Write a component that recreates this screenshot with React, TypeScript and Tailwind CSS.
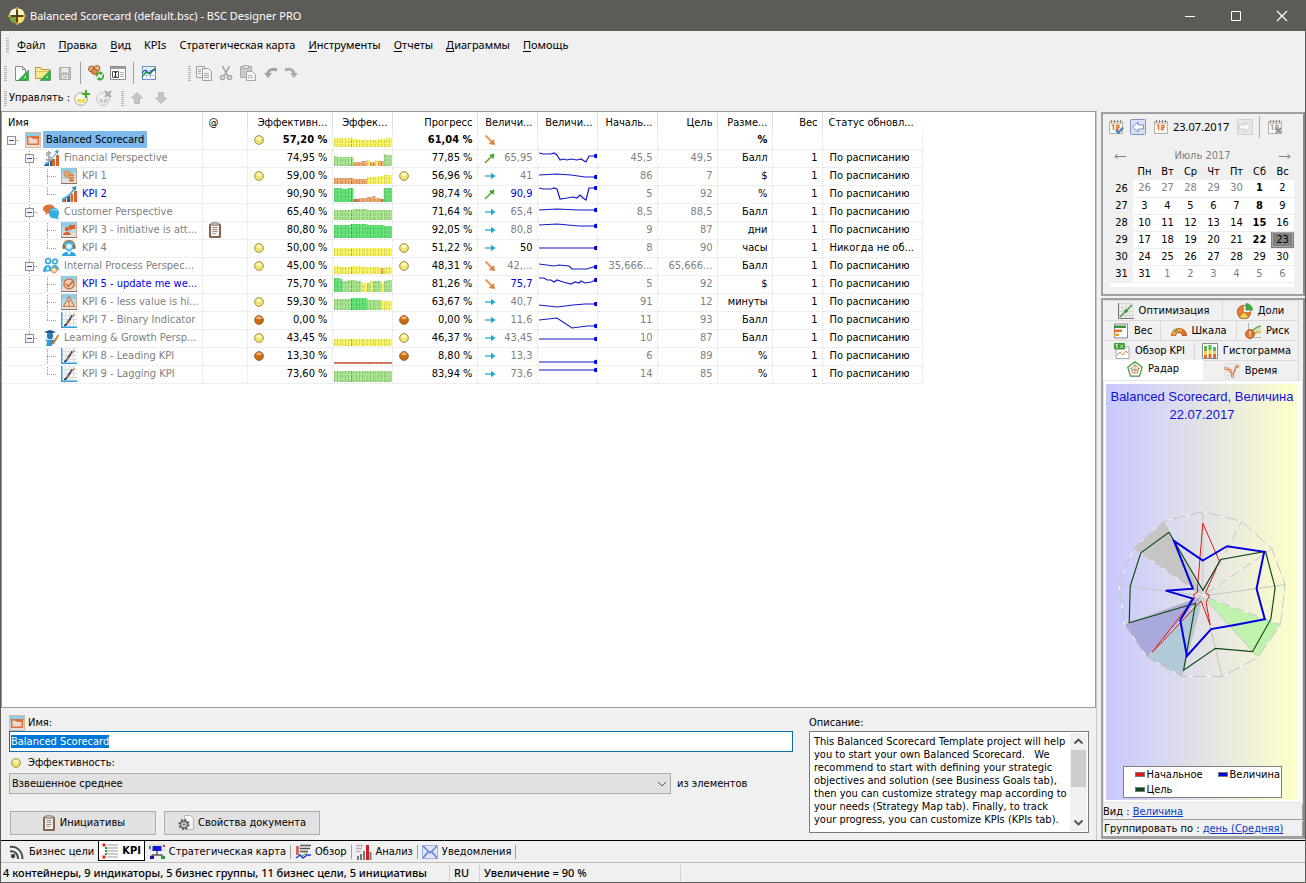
import { useEffect, useRef } from "react";
import type { ReactNode } from "react";

type Seg = [count: number, height: number, color: string];

type Row = {
    name: string;
    level: number;
    icon: string;
    last?: boolean;
    blue?: boolean;
    attach?: boolean;
    ball1?: string;
    ball2?: string;
    perf: string;
    progress: string;
    bars: Seg[];
    trend: string;
    value: string;
    valueColor?: string;
    line?: string;
    start: string;
    target: string;
    unit: string;
    weight: string;
    status: string;
};

const Y = "#f7f45f";
const G = "#a5e48b";
const D = "#5ee272";
const O = "#eda86c";
const R = "#cf745a";

const rows: Row[] = [
    { name: "Balanced Scorecard", level: 0, icon: "folder", ball1: "y", perf: "57,20 %", progress: "61,04 %", bars: [[7, 9, Y], [2, 8, Y], [7, 7, Y], [3, 8, Y], [2, 9, Y]], trend: "down", value: "", start: "", target: "", unit: "%", weight: "", status: "" },
    { name: "Financial Perspective", level: 1, icon: "finance", perf: "74,95 %", progress: "77,85 %", bars: [[1, 10, G], [6, 9, G], [3, 4, O], [2, 5, O], [1, 6, Y], [2, 4, O], [1, 6, Y], [2, 5, O], [1, 12, G], [2, 11, G]], trend: "up", value: "65,95", line: "0,4 4,5 12,5 15,4 18,6 21,11 24,10 28,11 32,10 38,11 42,10 47,13 50,7 57,7", start: "45,5", target: "49,5", unit: "Балл", weight: "1", status: "По расписанию" },
    { name: "KPI 1", level: 2, icon: "coins", ball1: "y", ball2: "y", perf: "59,00 %", progress: "56,96 %", bars: [[7, 6, O], [5, 5, O], [2, 7, Y], [2, 7, Y], [2, 8, Y], [3, 9, Y]], trend: "flat", value: "41", line: "0,8 18,7 32,8 46,10 57,10", start: "86", target: "7", unit: "$", weight: "1", status: "По расписанию" },
    { name: "KPI 2", level: 2, icon: "growth", last: true, blue: true, perf: "90,90 %", progress: "98,74 %", bars: [[3, 14, D], [2, 13, D], [2, 14, D], [2, 3, R], [3, 4, O], [2, 5, O], [1, 6, O], [2, 4, O], [1, 3, R], [3, 14, D]], trend: "up", value: "90,9", valueColor: "text-[#0000e0]", line: "0,3 4,4 12,4 15,3 18,4 21,14 28,13 34,12 38,13 41,10 44,13 47,15 50,3 57,3", start: "5", target: "92", unit: "%", weight: "1", status: "По расписанию" },
    { name: "Customer Perspective", level: 1, icon: "chat", perf: "65,40 %", progress: "71,64 %", bars: [[7, 10, G], [5, 11, G], [9, 10, G]], trend: "flat", value: "65,4", line: "0,7 18,6 40,7 57,7", start: "8,5", target: "88,5", unit: "Балл", weight: "1", status: "По расписанию" },
    { name: "KPI 3 - initiative is att...", level: 2, icon: "person", attach: true, perf: "80,80 %", progress: "92,05 %", bars: [[6, 13, D], [6, 14, D], [6, 13, D], [3, 12, D]], trend: "flat", value: "80,8", line: "0,4 18,3 40,5 57,5", start: "9", target: "87", unit: "дни", weight: "1", status: "По расписанию" },
    { name: "KPI 4", level: 2, icon: "support", last: true, ball1: "y", ball2: "y", perf: "50,00 %", progress: "51,22 %", bars: [[21, 8, Y]], trend: "flat", value: "50", valueColor: "text-black", line: "0,9 57,9", start: "8", target: "90", unit: "часы", weight: "1", status: "Никогда не об..." },
    { name: "Internal Process Perspec...", level: 1, icon: "process", ball1: "y", ball2: "y", perf: "45,00 %", progress: "48,31 %", bars: [[2, 8, Y], [4, 7, Y], [4, 8, Y], [7, 7, Y], [1, 6, O], [1, 6, Y], [2, 7, Y]], trend: "down", value: "42,...", line: "0,7 15,9 20,8 30,9 33,12 48,12 54,10 57,10", start: "35,666...", target: "65,666...", unit: "Балл", weight: "1", status: "По расписанию" },
    { name: "KPI 5 - update me we...", level: 2, icon: "check", blue: true, perf: "75,70 %", progress: "81,26 %", bars: [[2, 14, D], [1, 13, D], [2, 11, G], [3, 12, G], [2, 11, G], [2, 9, Y], [1, 9, G], [1, 11, Y], [3, 11, G], [1, 9, Y], [1, 11, G], [2, 12, G]], trend: "down", value: "75,7", valueColor: "text-[#0000e0]", line: "0,3 5,3 8,5 12,5 15,7 18,5 24,7 32,9 36,7 40,8 42,6 46,8 52,7 57,5", start: "5", target: "92", unit: "$", weight: "1", status: "По расписанию" },
    { name: "KPI 6 - less value is hi...", level: 2, icon: "warn", ball1: "y", perf: "59,30 %", progress: "63,67 %", bars: [[6, 11, G], [6, 12, D], [5, 10, G], [4, 9, Y]], trend: "flat", value: "40,7", line: "0,12 18,14 34,12 46,11 57,11", start: "91", target: "12", unit: "минуты", weight: "1", status: "По расписанию" },
    { name: "KPI 7 - Binary Indicator", level: 2, icon: "chart", last: true, ball1: "o", ball2: "o", perf: "0,00 %", progress: "0,00 %", bars: [], trend: "flat", value: "11,6", line: "0,9 18,7 33,17 48,15 57,15", start: "11", target: "93", unit: "Балл", weight: "1", status: "По расписанию" },
    { name: "Learning & Growth Persp...", level: 1, icon: "learn", last: true, ball1: "y", ball2: "y", perf: "43,45 %", progress: "46,37 %", bars: [[21, 7, Y]], trend: "flat", value: "43,45", line: "0,10 57,10", start: "10", target: "87", unit: "Балл", weight: "1", status: "По расписанию" },
    { name: "KPI 8 - Leading KPI", level: 2, icon: "chart", ball1: "o", ball2: "o", perf: "13,30 %", progress: "8,80 %", bars: [[21, 2, R]], trend: "flat", value: "13,3", line: "0,15 57,15", start: "6", target: "89", unit: "%", weight: "1", status: "По расписанию" },
    { name: "KPI 9 - Lagging KPI", level: 2, icon: "chart", last: true, perf: "73,60 %", progress: "83,94 %", bars: [[21, 11, G]], trend: "flat", value: "73,6", line: "0,5 57,5", start: "14", target: "85", unit: "%", weight: "1", status: "По расписанию" },
];

const columns = [
    { title: "Имя", width: "w-[200px]", align: "text-left" },
    { title: "@", width: "w-[45px]", align: "text-left" },
    { title: "Эффективн...", width: "w-[85px]", align: "text-right" },
    { title: "Эффек...", width: "w-[60px]", align: "text-right" },
    { title: "Прогресс", width: "w-[85px]", align: "text-right" },
    { title: "Величи...", width: "w-[60px]", align: "text-right" },
    { title: "Величи...", width: "w-[60px]", align: "text-right" },
    { title: "Началь...", width: "w-[60px]", align: "text-right" },
    { title: "Цель", width: "w-[60px]", align: "text-right" },
    { title: "Разме...", width: "w-[55px]", align: "text-right" },
    { title: "Вес", width: "w-[50px]", align: "text-right" },
    { title: "Статус обновл...", width: "w-[100px]", align: "text-left" },
];

const weeks = [
    { week: 26, days: [26, 27, 28, 29, 30, 1, 2] },
    { week: 27, days: [3, 4, 5, 6, 7, 8, 9] },
    { week: 28, days: [10, 11, 12, 13, 14, 15, 16] },
    { week: 29, days: [17, 18, 19, 20, 21, 22, 23] },
    { week: 30, days: [24, 25, 26, 27, 28, 29, 30] },
    { week: 31, days: [31, 1, 2, 3, 4, 5, 6] },
];

function Svg({ children, className = "" }: { children: ReactNode; className?: string }) {
    return (
        <svg viewBox="0 0 16 16" className={`h-4 w-4 shrink-0 ${className}`} fill="none" aria-hidden="true">
            {children}
        </svg>
    );
}

function Tile({ children }: { children: ReactNode }) {
    return (
        <Svg>
            <rect x="0" y="0" width="16" height="16" fill="#8fcdeb" />
            <rect x="0" y="5" width="16" height="6" fill="#b9dcea" />
            <rect x="0" y="11" width="16" height="5" fill="#e3e2de" />
            <path d="M.5 0v16M15.500 0v16" stroke="#c9a98e" />
            <path d="M0 15.500h16" stroke="#8a7364" />
            {children}
        </Svg>
    );
}

function TreeIcon({ name }: { name: string }) {
    switch (name) {
        case "folder":
            return (
                <Svg>
                    <rect width="16" height="16" fill="#8ecbe8" />
                    <rect y="6" width="16" height="5" fill="#bfdae3" />
                    <rect y="11" width="16" height="5" fill="#e6dfd8" />
                    <path d="M.5.5h15v15H.5z" stroke="#d5b9a2" />
                    <path d="M2.700 4.700h10.600v7.600H2.700z" fill="#efd9c9" stroke="#e0703f" strokeWidth="1.500" />
                    <path d="M6 5h7v2H8L7 6H6z" fill="#e0703f" />
                </Svg>
            );
        case "finance":
            return (
                <Svg>
                    <path d="M3 12h3v4H1zM7 10h2v6H7z" fill="#2b5a9e" />
                    <path d="M9 9h3v7H9zM13 5h3v11h-3z" fill="#d9642b" />
                    <path d="M1 15l7-5 6-8" stroke="#7cc6e6" strokeWidth="1.400" />
                    <path d="M15.500 0l-4 1 3.500 3z" fill="#2a9bd0" />
                    <path d="M8 3.500C7 2 3.500 2 3.500 4.300c0 2.500 4.800 1.600 4.800 4C8.300 10.500 4.500 11 3 9M5.800 1v10.500" stroke="#a3a3a3" strokeWidth="1.500" />
                </Svg>
            );
        case "coins":
            return (
                <Tile>
                    <path d="M3 4l4-2 3 3-1 4-3 1-3-2z" fill="#d9a376" stroke="#b98861" strokeWidth=".6" />
                    <path d="M8 7l5-1v7l-2 1-3-1z" fill="#e8742f" />
                    <path d="M8 8.500h5M8 11h5" stroke="#f6b383" />
                </Tile>
            );
        case "growth":
            return (
                <Svg>
                    <path d="M2 12h3v4H1zM6 10h3v6H6z" fill="#2b5a9e" />
                    <path d="M2 13h2v3H2zM9.500 8H12v8H9.500zM13 5h3v11h-3z" fill="#d9642b" />
                    <path d="M1 13c5-1 9-5 12-10" stroke="#3fa9dc" strokeWidth="1.500" />
                    <path d="M15.500 0l-5 1.500 4 3.500z" fill="#2f86bd" />
                </Svg>
            );
        case "chat":
            return (
                <Svg>
                    <ellipse cx="6" cy="4.800" rx="6" ry="4.300" fill="#df7038" />
                    <path d="M3 8l-1 3 4-2z" fill="#df7038" />
                    <path d="M11 4c3 0 5 2 5 5 0 2-1 3-1 4l.5 2.500-3-1C9 15 6 13 6 9.500 6 6 8 4 11 4z" fill="#37aee3" />
                    <path d="M8 7c1-1.500 4-2 6 0" stroke="#8fd3f1" strokeWidth="1.200" />
                </Svg>
            );
        case "person":
            return (
                <Tile>
                    <circle cx="6" cy="7" r="2.300" fill="#d9622c" />
                    <path d="M2 13c0-4 8-4 8 0zM8 3h6v4h-3l-2 2V7H8z" fill="#d9622c" />
                </Tile>
            );
        case "support":
            return (
                <Svg>
                    <circle cx="8" cy="6" r="5" fill="#45b5e6" />
                    <circle cx="8" cy="6.500" r="2.800" fill="#e3f4fb" />
                    <path d="M2.500 7C2 2 5 .8 8 .8S14 2 13.500 7" stroke="#a8764d" strokeWidth="1.400" />
                    <rect x="1.500" y="5" width="2.500" height="4" rx="1" fill="#8f6849" />
                    <rect x="12" y="5" width="2.500" height="4" rx="1" fill="#8f6849" />
                    <path d="M1 16c0-6 14-6 14 0z" fill="#2da5de" />
                    <path d="M6 12l2 3 2-3z" fill="#fff" />
                </Svg>
            );
        case "process":
            return (
                <Svg>
                    <circle cx="5" cy="3" r="2.500" fill="#fff" stroke="#2ba3d8" strokeWidth="1.500" />
                    <circle cx="12" cy="3.500" r="2.300" fill="#fff" stroke="#2ba3d8" strokeWidth="1.500" />
                    <path d="M0 14C0 5 9 5 9 13zM9 8c3-2 7-1 7 4H9z" fill="#38b0e3" />
                    <path d="M3 12l2-4 1 4z" fill="#fff" />
                    <circle cx="11" cy="12" r="2.600" fill="#fde7cf" stroke="#e18b3b" strokeWidth="1.800" strokeDasharray="1.400 .8" />
                </Svg>
            );
        case "check":
            return (
                <Tile>
                    <circle cx="8" cy="8" r="5" stroke="#d9713f" strokeWidth="1.500" fill="#e8cfbf" />
                    <path d="M5 8l2.500 2.500L12 5" stroke="#c9622f" strokeWidth="1.500" />
                </Tile>
            );
        case "warn":
            return (
                <Tile>
                    <path d="M8 2.500l5.500 10h-11z" fill="#ecd6c4" stroke="#c97c4c" strokeWidth="1.200" />
                    <path d="M8 6v3.500M8 10.500v1.200" stroke="#b9622f" strokeWidth="1.300" />
                </Tile>
            );
        case "learn":
            return (
                <Svg>
                    <path d="M1 2l6-2 6 2-6 2z" fill="#1d4f8f" />
                    <path d="M4 3.500h6v3a3 3 0 01-6 0z" fill="#2b78b8" />
                    <path d="M2 9l3 1h5l-1 6H3l1-4z" fill="#2f9fdc" />
                    <path d="M9 10l5-1-3 5H8z" fill="#2875b5" />
                    <path d="M15.500 5l-6 9" stroke="#e0833a" strokeWidth="2" />
                </Svg>
            );
        default:
            return (
                <Svg>
                    <rect width="16" height="16" fill="#f6f8fa" />
                    <path d="M4.500 0v15M8.500 0v15M12.500 0v15M1 3.500h15M1 7.500h15M1 11.500h15" stroke="#d6dee6" />
                    <path d="M.7 0v15.300H16" stroke="#2f9fdc" strokeWidth="1.400" />
                    <path d="M3 13.500c3 0 3-2 4-4s1.500-2 3-3" stroke="#1c2a5c" strokeWidth="1.500" />
                    <path d="M6 12c2-1 2-3 3-5s3-2 4.500-5" stroke="#e07b3c" strokeWidth="1.300" />
                    <path d="M8 9l3-6" stroke="#2a3f7c" strokeWidth="1.200" />
                </Svg>
            );
    }
}

function Ball({ kind }: { kind: string }) {
    return kind === "y" ? (
        <svg viewBox="0 0 10 10" className="h-[10px] w-[10px] shrink-0" aria-hidden="true">
            <circle cx="5" cy="5" r="4.400" fill="#eee272" stroke="#a3954a" />
            <ellipse cx="5" cy="3.600" rx="2.600" ry="1.800" fill="#fbf7b8" />
        </svg>
    ) : (
        <svg viewBox="0 0 10 10" className="h-[10px] w-[10px] shrink-0" aria-hidden="true">
            <circle cx="5" cy="5" r="4.400" fill="#c96a12" stroke="#a8652c" />
            <ellipse cx="5" cy="2.900" rx="2.800" ry="1.300" fill="#f0b57c" />
        </svg>
    );
}

function Trend({ kind }: { kind: string }) {
    return (
        <svg viewBox="0 0 12 12" className="h-3 w-3 shrink-0" fill="none" aria-hidden="true">
            {kind === "down" && (
                <>
                    <path d="M1.500 1.500L8 8" stroke="#e89a5c" strokeWidth="2" />
                    <path d="M11 11l-1-6-5.500 5z" fill="#df8642" />
                </>
            )}
            {kind === "up" && (
                <>
                    <path d="M1 11L8 4" stroke="#4ea32a" strokeWidth="1.500" />
                    <path d="M10.500 1.500L5 3l4.500 4z" fill="#4ea32a" />
                </>
            )}
            {kind === "flat" && (
                <>
                    <path d="M1 6h9" stroke="#1fa9d6" strokeWidth="1.300" />
                    <path d="M7 2.800L11.500 6 7 9.200z" fill="#1fa9d6" />
                </>
            )}
        </svg>
    );
}

function Bars({ segs }: { segs: Seg[] }) {
    const bars = segs.flatMap(([count, height, color]) => Array.from({ length: count }, () => ({ height, color })));
    const step = 58 / 21;
    return (
        <svg viewBox="0 0 58 17" className="block h-[17px] w-[58px]" aria-hidden="true">
            {bars.map((bar, i) => (
                <g key={i}>
                    <rect x={i * step} y={16 - bar.height} width={step + 0.1} height={bar.height} fill={bar.color} />
                    {bar.height > 2 && (
                        <path d={`M${Math.round(i * step) + 0.5} 16V${16 - bar.height}`} stroke="#000" strokeOpacity={i === 6 ? 0.3 : 0.14} strokeDasharray="3 1" />
                    )}
                </g>
            ))}
        </svg>
    );
}

function Line({ points }: { points: string }) {
    const end = points.split(" ").pop()!.split(",").map(Number);
    return (
        <svg viewBox="0 1 60 17" className="block h-[17px] w-[60px]" fill="none" aria-hidden="true">
            <polyline points={points} stroke="#1717c4" strokeWidth="1.200" />
            <circle cx={end[0]} cy={end[1]} r="2.200" fill="#0000e6" />
        </svg>
    );
}

function Guide({ kind }: { kind: "line" | "tee" | "elbow" | "none" }) {
    return (
        <svg viewBox="0 0 18 18" className="h-[18px] w-[18px] shrink-0" fill="none" shapeRendering="crispEdges" aria-hidden="true">
            {(kind === "line" || kind === "tee") && <path d="M9.500 0v18" stroke="#9a9a9a" strokeDasharray="1 1" />}
            {kind === "elbow" && <path d="M9.500 0v9" stroke="#9a9a9a" strokeDasharray="1 1" />}
            {(kind === "tee" || kind === "elbow") && <path d="M9 9.500h9" stroke="#9a9a9a" strokeDasharray="1 1" />}
        </svg>
    );
}

function Expander({ top, bottom }: { top: boolean; bottom: boolean }) {
    return (
        <button type="button" aria-label="Свернуть" className="h-[18px] w-[18px] shrink-0">
            <svg viewBox="0 0 18 18" className="block h-[18px] w-[18px]" fill="none" shapeRendering="crispEdges">
                {top && <path d="M9.500 0v5" stroke="#9a9a9a" strokeDasharray="1 1" />}
                {bottom && <path d="M9.500 14v4" stroke="#9a9a9a" strokeDasharray="1 1" />}
                <path d="M14 9.500h4" stroke="#9a9a9a" strokeDasharray="1 1" />
                <rect x="5.500" y="5.500" width="8" height="8" fill="#f4f4f4" stroke="#919191" />
                <path d="M7 9.500h5" stroke="#3b50a8" />
            </svg>
        </button>
    );
}

function Clipboard() {
    return (
        <Svg>
            <rect x="2" y="1.500" width="12" height="14.500" rx="1.500" fill="#8a6250" />
            <rect x="4" y="3" width="8" height="11" fill="#f4f1ec" />
            <rect x="5" y="0" width="6" height="3.500" rx="1" fill="#b9b4b0" stroke="#77706c" strokeWidth=".6" />
            <path d="M5.500 5.500h5M5.500 7.500h5M5.500 9.500h5M5.500 11.500h3" stroke="#8f8b88" />
        </Svg>
    );
}

function KpiTable() {
    return (
        <table className="w-[920px] table-fixed border-collapse">
            <colgroup>
                {columns.map((c, i) => (
                    <col key={i} className={c.width} />
                ))}
            </colgroup>
            <thead>
                <tr className="h-[19px]">
                    {columns.map((c, i) => (
                        <th key={i} scope="col" className={`border-r border-[#e0e0e0] pt-[2px] pr-1 pb-0 pl-[6px] font-normal whitespace-nowrap last:border-r-0 ${c.align}`}>
                            {c.title}
                        </th>
                    ))}
                </tr>
            </thead>
            <tbody>
                {rows.map((r) => {
                    const cell = "border-r border-b border-dotted border-[#e2e2e2] p-0 overflow-hidden whitespace-nowrap";
                    const num = `${cell} pr-1 text-right`;
                    const bold = r.level === 0 ? "font-bold" : "";
                    return (
                        <tr key={r.name} className="h-[18px]">
                            <td className={cell}>
                                <div className="flex h-[17px] items-center">
                                    {r.level === 0 && <Expander top={false} bottom={false} />}
                                    {r.level === 1 && (
                                        <>
                                            <Guide kind="none" />
                                            <Expander top bottom={!r.last} />
                                        </>
                                    )}
                                    {r.level === 2 && (
                                        <>
                                            <Guide kind="none" />
                                            <Guide kind={r.name.startsWith("KPI 8") || r.name.startsWith("KPI 9") ? "none" : "line"} />
                                            <Guide kind={r.last ? "elbow" : "tee"} />
                                        </>
                                    )}
                                    <span className="ml-[5px] flex items-center gap-[2px]">
                                        <TreeIcon name={r.icon} />
                                        <span className={r.level === 0 ? "bg-[#7cb9ec] px-[3px] leading-[17px] text-black" : r.blue ? "pl-[3px] text-[#0000e0]" : "pl-[3px] text-[#808080]"}>
                                            {r.name}
                                        </span>
                                    </span>
                                </div>
                            </td>
                            <td className={cell}>{r.attach && <div className="pl-1"><Clipboard /></div>}</td>
                            <td className={num}>
                                <div className={`flex items-center justify-between pl-[6px] ${bold}`}>
                                    <span>{r.ball1 && <Ball kind={r.ball1} />}</span>
                                    {r.perf}
                                </div>
                            </td>
                            <td className={`${cell} pl-px`}><Bars segs={r.bars} /></td>
                            <td className={num}>
                                <div className={`flex items-center justify-between pl-[6px] ${bold}`}>
                                    <span>{r.ball2 && <Ball kind={r.ball2} />}</span>
                                    {r.progress}
                                </div>
                            </td>
                            <td className={num}>
                                <div className={`flex items-center justify-between pl-[6px] ${r.valueColor ?? "text-[#808080]"}`}>
                                    <Trend kind={r.trend} />
                                    {r.value}
                                </div>
                            </td>
                            <td className={`${cell} pl-px`}>{r.line && <Line points={r.line} />}</td>
                            <td className={`${num} text-[#808080]`}>{r.start}</td>
                            <td className={`${num} text-[#808080]`}>{r.target}</td>
                            <td className={`${num} ${bold}`}>{r.unit}</td>
                            <td className={num}>{r.weight}</td>
                            <td className={`${cell} pl-[7px]`}>{r.status}</td>
                        </tr>
                    );
                })}
            </tbody>
        </table>
    );
}

function Grip() {
    return <span className="h-4 w-[3px] shrink-0 bg-[repeating-linear-gradient(0deg,#b4b4b4_0_1px,transparent_1px_2px)]" />;
}

function Tool({ label, children }: { label: string; children: ReactNode }) {
    return (
        <button type="button" aria-label={label} className="flex h-[22px] w-[22px] items-center justify-center">
            {children}
        </button>
    );
}

function TitleBar() {
    return (
        <header className="flex h-[31px] items-center bg-[#5d5b58] pl-[7px] text-white">
            <svg viewBox="0 0 18 18" className="h-[18px] w-[18px]" fill="none" aria-hidden="true">
                <circle cx="9" cy="9" r="7.800" fill="#54401a" />
                <path d="M8 8H1.200A8 8 0 018 1.200z" fill="#fbf8dc" />
                <path d="M10 8V1.200A8 8 0 0116.800 8z" fill="#fdf3b4" />
                <path d="M8 10v6.800A8 8 0 011.200 10z" fill="#7fa545" />
                <path d="M10 10h6.800A8 8 0 0110 16.800z" fill="#f7de6d" />
                <path d="M9 0v3M9 15v3M0 9h3M15 9h3" stroke="#e8b93c" strokeWidth="1.400" />
            </svg>
            <h1 className="ml-1 flex-1 font-['Noto_Sans',sans-serif] text-[11px]">Balanced Scorecard (default.bsc) - BSC Designer PRO</h1>
            <div className="flex">
                <button type="button" aria-label="Свернуть" className="flex h-[30px] w-[46px] items-center justify-center">
                    <svg viewBox="0 0 12 12" className="h-3 w-3" fill="none"><path d="M1 6.500h10" stroke="#fff" /></svg>
                </button>
                <button type="button" aria-label="Развернуть" className="flex h-[30px] w-[46px] items-center justify-center">
                    <svg viewBox="0 0 12 12" className="h-3 w-3" fill="none"><path d="M1.500 1.500h9v9h-9z" stroke="#fff" /></svg>
                </button>
                <button type="button" aria-label="Закрыть" className="flex h-[30px] w-[46px] items-center justify-center">
                    <svg viewBox="0 0 12 12" className="h-3 w-3" fill="none"><path d="M1 1l10 10M11 1L1 11" stroke="#fff" strokeWidth="1.200" /></svg>
                </button>
            </div>
        </header>
    );
}

const menu = [
    ["Ф", "айл"],
    ["П", "равка"],
    ["В", "ид"],
    ["", "KPIs"],
    ["", "Стратегическая карта"],
    ["И", "нструменты"],
    ["О", "тчеты"],
    ["Д", "иаграммы"],
    ["П", "омощь"],
];

function Toolbars() {
    return (
        <div className="flex flex-col">
            <nav className="flex h-7 items-center pl-[5px] font-['Noto_Sans',sans-serif] text-[11px]">
                <Grip />
                <div className="ml-2 flex gap-[13px]">
                    {menu.map(([key, rest], i) => (
                        <button key={i} type="button">
                            <span className="underline underline-offset-2">{key}</span>
                            {rest}
                        </button>
                    ))}
                </div>
            </nav>
            <div className="flex h-[27px] items-center pl-[3px]">
                <Grip />
                <div className="ml-[3px] flex items-center">
                    <Tool label="Новый">
                        <Svg>
                            <path d="M2.500 1.500h7l3 3v11h-10z" fill="#fff" stroke="#8a8a8a" />
                            <path d="M9.500 1.500v3h3" stroke="#8a8a8a" />
                            <path d="M15.500 5v10.500H5z" fill="#35b04a" stroke="#2c8f3b" strokeWidth=".6" />
                            <path d="M13 10.500V13h-2.500z" fill="#c5efc4" />
                        </Svg>
                    </Tool>
                    <Tool label="Открыть">
                        <Svg>
                            <path d="M.5 2.500h5l1 2h8v9H.5z" fill="#f8ea8e" stroke="#b99a3c" />
                            <path d="M1 6.500h13" stroke="#dcc661" />
                            <path d="M15.500 5v10.500H5z" fill="#35b04a" stroke="#2c8f3b" strokeWidth=".6" />
                            <path d="M13 10.500V13h-2.500z" fill="#c5efc4" />
                        </Svg>
                    </Tool>
                    <Tool label="Сохранить">
                        <Svg>
                            <path d="M2.500 2.500h11v12h-11z" fill="#c6c6c6" stroke="#a8a8a8" />
                            <path d="M5 3h6v4H5z" fill="#ececec" />
                            <path d="M4.500 9.500h7v5h-7z" fill="#f3f3f3" stroke="#ababab" />
                            <path d="M6 11.500h4M6 13h4" stroke="#b5b5b5" />
                        </Svg>
                    </Tool>
                    <span className="mx-1 h-[22px] w-px bg-[#a0a0a0]" />
                    <Tool label="Обновить">
                        <Svg>
                            <circle cx="3.500" cy="4" r="2.900" fill="#e8b07a" stroke="#9f5520" />
                            <circle cx="9" cy="3.500" r="2.900" fill="#efc08c" stroke="#9f5520" />
                            <circle cx="6.500" cy="6.500" r="2.900" fill="#dc8d4a" stroke="#9f5520" />
                            <path d="M8.500 11.500a3.500 3.500 0 014-3.500M15 9.500a3.500 3.500 0 01-3.500 5" stroke="#3faa3a" strokeWidth="1.800" />
                            <path d="M12 6l3 2-3 2.500zM12 12v4l-3.500-2z" fill="#3faa3a" />
                        </Svg>
                    </Tool>
                    <Tool label="Свойства">
                        <Svg>
                            <path d="M.5 1.500h15v13H.5z" fill="#fafafa" stroke="#8c8c8c" />
                            <path d="M1 3h14" stroke="#9e9e9e" strokeWidth="2" />
                            <path d="M2.500 6.500h6v6h-6z" fill="#fff" stroke="#555" />
                            <path d="M4.500 7.500h2M5.500 7.500v4M4.500 11.500h2" stroke="#222" />
                            <path d="M10 7.500h4M10 9.500h4M10 11.500h4" stroke="#b5b5b5" />
                        </Svg>
                    </Tool>
                    <span className="mx-1 h-[22px] w-px bg-[#a0a0a0]" />
                    <Tool label="График">
                        <Svg>
                            <path d="M1.500 1.500h13v13h-13z" fill="#fff" stroke="#5f83c4" />
                            <path d="M5.500 1v14M9.500 1v14M1 5.500h14M1 10.500h14" stroke="#b6c8e6" />
                            <path d="M1 12l4-5 4 2 5-6" stroke="#2da13a" strokeWidth="1.500" />
                            <path d="M1 8l3-3 4 3 4-3h3" stroke="#2c5fc0" strokeWidth="1.300" />
                        </Svg>
                    </Tool>
                </div>
                <div className="ml-[28px] flex items-center">
                    <Grip />
                    <span className="w-[2px]" />
                    <Tool label="Копировать">
                        <Svg>
                            <path d="M.5 1.500h8v11h-8z" fill="#f2f2f2" stroke="#a0a0a0" />
                            <path d="M6.500 3.500h6l3 3v9h-9z" fill="#f2f2f2" stroke="#a0a0a0" />
                            <path d="M2 4.500h3M2 6.500h3M2 8.500h3M8 8.500h5M8 10.500h5M8 12.500h5" stroke="#a8a8a8" />
                        </Svg>
                    </Tool>
                    <Tool label="Вырезать">
                        <Svg>
                            <path d="M4.500 1l5 9.500M11.500 1l-5 9.500" stroke="#a3a3a3" strokeWidth="1.600" />
                            <circle cx="4.500" cy="12.500" r="2" stroke="#a3a3a3" strokeWidth="1.500" />
                            <circle cx="11.500" cy="12.500" r="2" stroke="#a3a3a3" strokeWidth="1.500" />
                        </Svg>
                    </Tool>
                    <Tool label="Вставить">
                        <Svg>
                            <path d="M.5 1.500h11v11H.5z" fill="#c9c9c9" stroke="#a9a9a9" />
                            <path d="M3.500.5h5v3h-5z" fill="#e3e3e3" stroke="#a9a9a9" />
                            <path d="M6.500 6.500h6l3 3v6h-9z" fill="#f4f4f4" stroke="#a5a5a5" />
                            <path d="M8 10.500h4M8 12.500h5" stroke="#b5b5b5" />
                        </Svg>
                    </Tool>
                    <Tool label="Отменить">
                        <Svg>
                            <path d="M2 8h8l-4 5z" fill="#a3a3a3" />
                            <path d="M6 9c0-4 4-6 9-4" stroke="#a3a3a3" strokeWidth="3" />
                        </Svg>
                    </Tool>
                    <Tool label="Вернуть">
                        <Svg>
                            <path d="M14 8H6l4 5z" fill="#adadad" />
                            <path d="M10 9c0-4-4-6-9-4" stroke="#adadad" strokeWidth="3" />
                        </Svg>
                    </Tool>
                </div>
            </div>
            <div className="flex h-6 items-center pl-[3px]">
                <Grip />
                <span className="ml-[2px]">Управлять :</span>
                <div className="ml-px flex items-center">
                    <Tool label="Добавить">
                        <Svg>
                            <circle cx="7" cy="9" r="6.300" fill="#f8f8f0" stroke="#a6a6a0" />
                            <path d="M3 9h4v4C4.500 13 3 11.500 3 9zM8 9h4c0 2.500-1.500 4-4 4z" fill="#f0d84a" />
                            <path d="M12 0v8M8 4h8" stroke="#46a82c" strokeWidth="2.200" />
                        </Svg>
                    </Tool>
                    <Tool label="Удалить">
                        <Svg>
                            <circle cx="7" cy="9" r="6.300" fill="#f0f0f0" stroke="#c4c4c4" />
                            <path d="M3 9h4v4C4.500 13 3 11.500 3 9zM8 9h4c0 2.500-1.500 4-4 4z" fill="#c9c9c9" />
                            <path d="M9 1l6 6M15 1L9 7" stroke="#a8a8a8" strokeWidth="2" />
                        </Svg>
                    </Tool>
                </div>
                <div className="ml-[6px] flex items-center gap-[2px]">
                    <Grip />
                    <Tool label="Вверх">
                        <Svg><path d="M8 2.500l5.500 5.500h-3v5.500h-5V8h-3z" fill="#c6c6c6" stroke="#b0b0b0" strokeWidth=".8" /></Svg>
                    </Tool>
                    <Tool label="Вниз">
                        <Svg><path d="M8 13.500L2.500 8h3V2.500h5V8h3z" fill="#c6c6c6" stroke="#b0b0b0" strokeWidth=".8" /></Svg>
                    </Tool>
                </div>
            </div>
        </div>
    );
}

const description =
    "This Balanced Scorecard Template project will help\nyou to start your own Balanced Scorecard.   We\nrecommend to start with defining your strategic\nobjectives and solution (see Business Goals tab),\nthen you can customize strategy map according to\nyour needs (Strategy Map tab). Finally, to track\nyour progress, you can customize KPIs (KPIs tab).";

function DetailsForm() {
    const nameRef = useRef<HTMLInputElement>(null);

    useEffect(() => {
        nameRef.current?.focus();
        nameRef.current?.select();
    }, []);

    return (
        <form className="flex h-[132px] shrink-0 pt-[6px] pr-[7px] pl-2">
            <div className="flex flex-1 flex-col">
                <label htmlFor="item-name" className="flex h-[17px] items-center gap-[3px]">
                    <TreeIcon name="folder" />
                    Имя:
                </label>
                <input
                    id="item-name"
                    ref={nameRef}
                    defaultValue="Balanced Scorecard"
                    className="h-[21px] border border-[#0f6fae] bg-white px-px outline-none selection:bg-[#0078d7] selection:text-white"
                />
                <label htmlFor="item-perf" className="flex h-[21px] items-center gap-[7px] pl-[2px]">
                    <Ball kind="y" />
                    Эффективность:
                </label>
                <div className="flex items-center gap-[6px]">
                    <div className="relative w-[662px]">
                        <select id="item-perf" className="h-[21px] w-full appearance-none border border-[#acacac] bg-[#e1e1e1] px-[2px]">
                            <option>Взвешенное среднее</option>
                        </select>
                        <svg viewBox="0 0 10 6" className="pointer-events-none absolute top-2 right-1 h-[6px] w-[10px]" fill="none">
                            <path d="M1 1l4 4 4-4" stroke="#555" />
                        </svg>
                    </div>
                    <span>из элементов</span>
                </div>
                <div className="mt-[17px] flex gap-2 pl-px">
                    <button type="button" className="flex h-6 w-[146px] items-center justify-center gap-[3px] border border-[#adadad] bg-[#e1e1e1]">
                        <Clipboard />
                        Инициативы
                    </button>
                    <button type="button" className="flex h-6 w-[156px] items-center justify-center gap-1 border border-[#adadad] bg-[#e1e1e1]">
                        <Svg>
                            <path d="M6.500.5h6l3 3v11h-9z" fill="#f5f5f5" stroke="#b5b5b5" />
                            <circle cx="6" cy="9.500" r="4.600" stroke="#5f5f5f" strokeWidth="2" strokeDasharray="2 1.600" />
                            <circle cx="6" cy="9.500" r="3.300" fill="#e8e8e8" stroke="#5f5f5f" strokeWidth="1.400" />
                            <circle cx="6" cy="9.500" r="1.200" fill="#5f5f5f" />
                        </Svg>
                        Свойства документа
                    </button>
                </div>
            </div>
            <div className="ml-4 flex w-[280px] flex-col">
                <label htmlFor="item-desc" className="h-[17px] leading-[17px]">Описание:</label>
                <div className="flex h-[102px] border border-[#7a7a7a] bg-white p-px">
                    <textarea id="item-desc" defaultValue={description} className="flex-1 resize-none overflow-hidden pt-[2px] pl-[3px] leading-[13px] whitespace-pre outline-none" />
                    <div className="flex w-[17px] flex-col items-center bg-[#f0f0f0]">
                        <svg viewBox="0 0 17 17" className="h-[17px] w-[17px]" fill="none"><path d="M4.500 10.500l4-4 4 4" stroke="#505050" strokeWidth="1.800" /></svg>
                        <div className="h-[37px] w-[15px] bg-[#cdcdcd]" />
                        <svg viewBox="0 0 17 17" className="mt-auto h-[17px] w-[17px]" fill="none"><path d="M4.500 6.500l4 4 4-4" stroke="#505050" strokeWidth="1.800" /></svg>
                    </div>
                </div>
            </div>
        </form>
    );
}

function CalIcon({ color, mark }: { color: string; mark?: ReactNode }) {
    return (
        <Svg>
            <path d="M1.500 2.500h13v12h-13z" fill="#fbf6f0" stroke="#b8b0aa" />
            <path d="M2 4.500h12" stroke="#cfc8c2" />
            <path d="M3.500 1v3M6.500 1v3M9.500 1v3M12.500 1v3" stroke="#8d8781" />
            <path d="M4 7l1.500-1v5M8 6.500h3v2H8.500v2H11" stroke={color} strokeWidth="1.300" />
            {mark}
        </Svg>
    );
}

function CalendarPanel() {
    return (
        <section className="h-[184px] shrink-0 border-2 border-[#a0a0a0] border-r-[#8a8a8a] pt-[2px] pr-2 pl-[5px]">
            <div className="flex h-[22px] items-center">
                <button type="button" aria-label="Сегодня">
                    <CalIcon color="#e0762f" mark={<path d="M8 11l2.500 3L15 8.500" stroke="#3f7fc4" strokeWidth="2" />} />
                </button>
                <button type="button" aria-label="Назад" className="ml-[6px]">
                    <Svg>
                        <rect x=".5" y=".5" width="15" height="15" rx="1" fill="#d7e0f4" stroke="#7d93c8" />
                        <path d="M2.500 8L8 3v3h5.500v4H8v3z" fill="#fff" stroke="#6d86c4" strokeWidth=".9" />
                    </Svg>
                </button>
                <button type="button" className="ml-[7px] flex items-center gap-1 font-['Noto_Sans',sans-serif] text-[11px]">
                    <CalIcon color="#e0762f" />
                    23.07.2017
                </button>
                <button type="button" aria-label="Вперёд" className="ml-2">
                    <Svg>
                        <rect x=".5" y=".5" width="15" height="15" rx="1" fill="#e6e6e6" stroke="#cfcfcf" />
                        <path d="M13.500 8L8 3v3H2.500v4H8v3z" fill="#fafafa" stroke="#c8c8c8" strokeWidth=".9" />
                    </Svg>
                </button>
                <span className="ml-[6px] h-[22px] w-px bg-[#b0b0b0]" />
                <button type="button" aria-label="Удалить дату" className="ml-[7px]">
                    <CalIcon color="#a8a8a8" mark={<path d="M9 9l5 5M14 9l-5 5" stroke="#8f8f8f" strokeWidth="2" />} />
                </button>
            </div>
            <div className="mt-[10px] flex items-center justify-between pr-1 pl-[6px] text-[#808080]">
                <button type="button" aria-label="Предыдущий месяц"><svg viewBox="0 0 12 7" className="h-[7px] w-3" fill="none"><path d="M12 3.500H1M3.500 1L1 3.500 3.500 6" stroke="#808080" /></svg></button>
                <span className="leading-4">Июль 2017</span>
                <button type="button" aria-label="Следующий месяц"><svg viewBox="0 0 12 7" className="h-[7px] w-3" fill="none"><path d="M0 3.500h11M8.500 1L11 3.500 8.500 6" stroke="#808080" /></svg></button>
            </div>
            <table className="ml-[2px] w-[184px] table-fixed border-collapse text-center">
                <thead>
                    <tr className="h-4">
                        <th className="w-[23px]" aria-label="Неделя" />
                        {["Пн", "Вт", "Ср", "Чт", "Пт", "Сб", "Вс"].map((d) => (
                            <th key={d} scope="col" className="p-0 font-normal">{d}</th>
                        ))}
                    </tr>
                </thead>
                <tbody>
                    {weeks.map(({ week, days }, w) => (
                        <tr key={week} className="h-[17px]">
                            <th scope="row" className="p-0 font-normal">{week}</th>
                            {days.map((d, i) => {
                                const outside = (w === 0 && d > 20) || (w === 5 && d < 10);
                                const today = w === 3 && d === 23;
                                return (
                                    <td
                                        key={i}
                                        className={`border-b border-[#ececec] p-0 ${today ? "bg-[#808080] outline outline-offset-[-2px] outline-[#a5a5a5]" : "bg-white"} ${outside ? "text-[#808080]" : ""} ${i === 5 && w < 4 ? "font-bold" : ""}`}
                                    >
                                        {d}
                                    </td>
                                );
                            })}
                        </tr>
                    ))}
                </tbody>
            </table>
            <div className="ml-[2px] h-1 w-[184px] bg-white" />
        </section>
    );
}

const grid = "M1 .5h14v15H1zM4.500 0v16M8 0v16M11.500 0v16M1 4.500h14M1 8.500h14M1 12.500h14";

const tabRows = [
    [
        { label: "Оптимизация", grow: "grow-[117]", icon: <><path d={grid} stroke="#d5d5d5" /><path d="M.5 0v15.500H16" stroke="#777" /><path d="M2 14L14 2" stroke="#3a9a3a" strokeWidth="1.200" /><circle cx="8" cy="8" r="1.800" fill="#3a9a3a" /></> },
        { label: "Доли", grow: "grow-[75]", icon: <><path d="M7 9V2a7 7 0 107 7z" fill="#e57d35" /><path d="M7 9L2 14a7 7 0 0010 0z" fill="#f3cf55" stroke="#8a5a2a" strokeWidth=".6" /><circle cx="7" cy="9" r="6.700" stroke="#a0552a" strokeWidth=".7" /><path d="M9 7V.5A6.500 6.500 0 0115.500 7z" fill="#3fae45" stroke="#287a2d" strokeWidth=".6" /></> },
    ],
    [
        { label: "Вес", grow: "grow-[56]", icon: <><path d="M1.500 1h13v14h-13z" fill="#fff" stroke="#888" /><path d="M1 2.500h12v2.500H1z" fill="#3c8f3c" /><path d="M1 6.500h8V9H1z" fill="#e0762f" /><path d="M1 10.500h5V13H1z" fill="#e9a53a" /></> },
        { label: "Шкала", grow: "grow-[75]", icon: <><path d="M2.500 13a5.500 5.500 0 0111 0" stroke="#a8501c" strokeWidth="5" /><path d="M2.500 12.500a5.500 5.500 0 018.500-4.300" stroke="#f0a23f" strokeWidth="3.600" /><path d="M11 8.200a5.500 5.500 0 012.500 4.300" stroke="#e0702f" strokeWidth="3.600" /><path d="M4 8.500l2.500-1.500" stroke="#4aa840" strokeWidth="2" /></> },
        { label: "Риск", grow: "grow-[62]", icon: <><path d="M4 8L15.500 3v8H4z" fill="#d3e4b4" /><path d="M3.500 0v15M3 14.500h13" stroke="#b5b5b5" /><path d="M3 9c5 0 6-5 13-6" stroke="#5aa844" strokeWidth="1.400" /><path d="M3 13c5 1 6-5 13-4" stroke="#e9a53a" strokeWidth="1.400" /><circle cx="5" cy="11" r="4.500" fill="#dd7430" stroke="#a34d17" strokeWidth=".7" /><path d="M5 8.500v3M5 12.500v1.300" stroke="#fff" strokeWidth="1.300" /></> },
    ],
    [
        { label: "Обзор KPI", grow: "grow-[89]", icon: <><path d="M2 4h13v11.500H2z" fill="#fff" stroke="#a9a9a9" /><path d="M3 12l3-3 3 3 3-4 2 2" stroke="#e08a4a" /><rect width="11" height="6.500" rx="1" fill="#3e9b33" /><path d="M4 1.500H2V3h1.500v1.700H2M6 1.500l3.500 3.500M9.500 1.500L6 5" stroke="#d8f0cf" strokeWidth=".9" /></> },
        { label: "Гистограмма", grow: "grow-[103]", icon: <><path d="M.5.5h15v15H.5z" fill="#fff" stroke="#888" /><path d="M2 3h3v5H2zM6.500 2h3v5h-3zM11 4h3v4h-3z" fill="#5cb850" /><path d="M2 8h3v4H2zM6.500 7h3v4h-3zM11 8h3v3h-3z" fill="#f2d05a" /><path d="M2 12h3v3H2zM6.500 11h3v4h-3zM11 11h3v4h-3z" fill="#df6b35" /></> },
    ],
    [
        { label: "Радар", grow: "grow-[99]", active: true, icon: <><path d="M8 .8l7.200 5.400-2.700 9h-9l-2.700-9z" stroke="#3a9a3a" strokeWidth="1.200" /><path d="M8 4l3.800 3-1.300 5h-5L4.200 7z" fill="#fdf0e6" stroke="#dc8a52" /><path d="M8 2v10M3 7l8 3M13 7l-8 3" stroke="#888" strokeWidth=".6" /></> },
        { label: "Время", grow: "grow-[94]", icon: <><path d={grid} stroke="#e3e3e3" /><path d="M2 5.500L6 7l2.500 6L12 4l3-1" stroke="#dc7a3d" strokeWidth="1.500" /><g fill="#fbe3d2" stroke="#dc7a3d"><circle cx="1.800" cy="5.500" r="1.300" /><circle cx="6" cy="7.500" r="1.300" /><circle cx="8.500" cy="13" r="1.300" /><circle cx="13" cy="3.500" r="1.300" /></g></> },
    ],
];

const rim = ["308,33", "425,62", "517,145", "556,253", "542,373", "474,472", "366,530", "245,530", "140,472", "72,373", "55,253", "100,143", "190,62"];

function Radar() {
    return (
        <svg viewBox="16 -28 579 600" className="h-[200px] w-full" fill="none" role="img" aria-label="Радар">
            <polygon points="308,287 542,373 474,472" fill="#c2f3ae" />
            <polygon points="308,287 245,530 140,472" fill="#b2c9d8" />
            <polygon points="308,287 140,472 72,373" fill="#a9a9db" />
            <polygon points="308,287 100,143 190,62" fill="#c5c5c6" />
            {rim.map((p) => (
                <polyline key={p} points={`308,287 ${p}`} stroke="#c6c6c6" strokeWidth="3" />
            ))}
            <polygon points={rim.join(" ")} stroke="#c6c6c6" strokeWidth="3" />
            <polygon points={rim.join(" ")} stroke="#fff" strokeWidth="3" strokeDasharray="14 40" />
            {[1, 2, 4, 8, 11].map((i) => (
                <polyline key={i} points={`308,287 ${rim[i]}`} stroke="#fff" strokeWidth="3" strokeDasharray="14 30" />
            ))}
            <polygon points="308,68 358,182 316,278 328,285 322,298 318,306 330,374 303,302 155,457 283,293 280,283 292,275 292,262" stroke="#e01818" strokeWidth="3" />
            <polygon points="308,270 362,177 497,153 526,262 513,357 458,455 346,445 250,511 286,309 86,368 89,258 121,157 206,95" stroke="#0a4a14" strokeWidth="3.500" />
            <polygon points="308,180 381,137 493,154 470,265 495,357 400,375 333,387 260,468 240,360 278,295 196,271 278,265 221,121" stroke="#0000e0" strokeWidth="6" />
        </svg>
    );
}

function LegendItem({ color, label }: { color: string; label: string }) {
    return (
        <span className="flex items-center gap-[2px]">
            <span className={`h-[5px] w-[10px] border border-[#777] ${color}`} />
            {label}
        </span>
    );
}

function ChartPanel() {
    return (
        <section className="flex flex-1 flex-col border-2 border-[#a0a0a0] border-r-[#8a8a8a]">
            <div role="tablist" className="flex flex-col pr-1">
                {tabRows.map((row, i) => (
                    <div key={i} className={`flex h-5 ${i < 3 ? "pl-[2px]" : ""}`}>
                        {row.map((t) => (
                            <button
                                key={t.label}
                                type="button"
                                role="tab"
                                aria-selected={!!t.active}
                                className={`flex basis-0 items-center justify-center gap-[5px] ${t.grow} ${t.active ? "bg-white pb-[2px]" : "border-t border-r border-[#dadada]"}`}
                            >
                                <Svg>{t.icon}</Svg>
                                {t.label}
                            </button>
                        ))}
                    </div>
                ))}
            </div>
            <div className="flex flex-1 flex-col border border-[#e4e4e4] bg-white pt-[3px] pr-1 pb-[2px] pl-[2px]">
                <div className="flex flex-1 flex-col bg-linear-to-r from-[#c8c8ff] via-[#e2e2e6] to-[#ffffc8] pb-[2px]">
                    <p className="pt-1 text-center font-['Liberation_Sans',Arial,sans-serif] text-[13px] leading-[18px] text-[#1010e0]">
                        Balanced Scorecard, Величина
                        <br />
                        22.07.2017
                    </p>
                    <div className="mt-[67px]">
                        <Radar />
                    </div>
                    <div className="mx-auto mt-auto grid w-[159px] grid-cols-[83px_auto] border border-[#808080] bg-white pl-[11px] leading-[15px]">
                        <LegendItem color="bg-[#e01818]" label="Начальное" />
                        <LegendItem color="bg-[#0000e0]" label="Величина" />
                        <LegendItem color="bg-[#0a4a14]" label="Цель" />
                    </div>
                </div>
            </div>
            <div className="mt-px h-4 border-r border-b border-[#a0a0a0] leading-[15px]">
                Вид : <a href="#view" className="text-[#0a3cc8] underline">Величина</a>
            </div>
            <div className="mt-px h-4 border-r border-b border-[#a0a0a0] pl-px leading-[15px]">
                Группировать по : <a href="#group" className="text-[#0a3cc8] underline">день (Средняя)</a>
            </div>
        </section>
    );
}

function BottomTabs() {
    const tab = "flex items-center gap-1";
    return (
        <nav className="flex h-[22px] shrink-0 items-center border-t border-black">
            <button type="button" className={`${tab} mr-1 ml-2`}>
                <Svg>
                    <circle cx="4" cy="12" r="2.200" fill="#444" />
                    <path d="M1 7.500c4-1 8 2 8 7.500M1 3c7-1 12.500 4 12.500 12" stroke="#4a4a4a" strokeWidth="2" />
                </Svg>
                Бизнес цели
            </button>
            <button type="button" className={`${tab} h-5 self-start border-x border-b border-black bg-white px-[3px] font-bold`}>
                <Svg>
                    <path d="M5 2h11M5 5h11M5 8h11M5 11h11M5 14h11" stroke="#9a9a9a" strokeWidth="1.200" />
                    <path d="M.5 2h3M.5 14h3" stroke="#e02020" strokeWidth="3" />
                    <path d="M3 5h2M3 8h2M3 11h2" stroke="#2ca02c" strokeWidth="1.800" />
                </Svg>
                KPI
            </button>
            <button type="button" className={`${tab} ml-1`}>
                <Svg>
                    <path d="M0 1h16M0 6h16M0 11h16" stroke="#cfcfcf" />
                    <path d="M3.500 2h9v5h-9z" fill="#1717d8" />
                    <path d="M8 7v4M3 14v-3h10v3" stroke="#222" />
                    <path d="M0 2h2v3H0zM12 12h4v3h-4z" fill="#2f9a2f" />
                    <path d="M1 12h4v3H1z" fill="#1717a8" />
                    <path d="M14 1h2v2h-2z" fill="#d33" />
                </Svg>
                Стратегическая карта
            </button>
            <span className="mx-1 h-[14px] w-px bg-[#a0a0a0]" />
            <button type="button" className={tab}>
                <Svg>
                    <path d="M1 2h3v9H1z" fill="#d36a5a" />
                    <path d="M5 1.500h11M5 4.500h10M5 7.500h8" stroke="#555" strokeWidth="1.400" />
                    <path d="M1 14l4-3 3 3 4-3h4" stroke="#1e3fd0" strokeWidth="1.500" />
                    <path d="M7 12l5-3" stroke="#2ca02c" />
                </Svg>
                Обзор
            </button>
            <span className="mx-1 h-[14px] w-px bg-[#a0a0a0]" />
            <button type="button" className={tab}>
                <Svg>
                    <path d="M0 1.500h7M0 4.500h6M0 7.500h5" stroke="#b5b5b5" strokeWidth="1.500" />
                    <path d="M2 12v4M5 10v6M8 7v9M14.500 8v8" stroke="#777" strokeWidth="2" />
                    <path d="M11.500 1v15" stroke="#cc1f1f" strokeWidth="3" />
                </Svg>
                Анализ
            </button>
            <span className="mx-1 h-[14px] w-px bg-[#a0a0a0]" />
            <button type="button" className={tab}>
                <Svg>
                    <path d="M.5 1.500h15v13H.5z" fill="#dfe6fb" stroke="#9fb0e6" />
                    <path d="M1 2l7 7 7-7M1 14l5-6M15 14l-5-6" stroke="#5570d0" strokeWidth="1.200" />
                </Svg>
                Уведомления
            </button>
            <span className="mx-1 h-[14px] w-px bg-[#a0a0a0]" />
        </nav>
    );
}

export default function App() {
    return (
        <div className="flex min-h-screen flex-col border-x border-b border-[#5d5b58] bg-[#f0f0f0] font-['DejaVu_Sans_Condensed','DejaVu_Sans',sans-serif] text-[11px] leading-4 text-black">
            <TitleBar />
            <Toolbars />
            <div className="flex flex-1">
                <main className="flex flex-1 flex-col border-r border-[#c8c8c8] pt-px">
                    <div className="flex-1 border border-[#9a9aa0] bg-white">
                        <KpiTable />
                    </div>
                    <DetailsForm />
                </main>
                <aside className="ml-1 flex w-[204px] flex-col gap-[2px] pt-[2px] pb-px">
                    <CalendarPanel />
                    <ChartPanel />
                </aside>
            </div>
            <BottomTabs />
            <footer className="flex h-5 shrink-0 items-center border-t border-[#bdbdbd] font-['Noto_Sans',sans-serif] text-[11px] font-medium whitespace-nowrap">
                <span className="w-[449px] border-r border-[#d0d0d0] pl-[2px]">4 контейнеры, 9 индикаторы, 5 бизнес группы, 11 бизнес цели, 5 инициативы</span>
                <span className="w-[30px] border-r border-[#d0d0d0] pl-1">RU</span>
                <span className="w-[201px] border-r border-[#d0d0d0] pl-1">Увеличение = 90 %</span>
            </footer>
        </div>
    );
}
